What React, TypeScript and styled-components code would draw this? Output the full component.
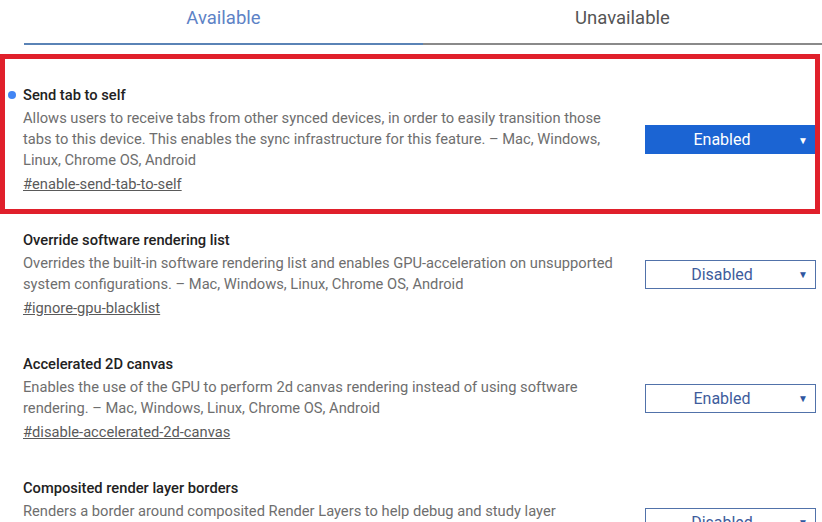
import React from "react";
import styled, { createGlobalStyle, css } from "styled-components";

const Global = createGlobalStyle`
  html, body { margin: 0; padding: 0; background: #fff; }
  body { font-family: Roboto, "Noto Sans", Arial, sans-serif; overflow: hidden; }
`;

const Page = styled.div`
  width: 822px;
  height: 522px;
  overflow: hidden;
  background: #fff;
`;

const Tabs = styled.div`
  display: flex;
  padding-left: 24px;
`;

const Tab = styled.div<{ $active?: boolean }>`
  width: 399px;
  height: 45px;
  box-sizing: border-box;
  padding-top: 6px;
  text-align: center;
  font-size: 18.5px;
  line-height: 24px;
  color: ${(p) => (p.$active ? "#5d82c6" : "#555")};
  border-bottom: 2px solid ${(p) => (p.$active ? "#5a83b6" : "#8a8a8a")};
`;

const List = styled.div`
  display: flex;
  flex-direction: column;
  gap: 34px;
  padding: 39px 6px 0 23px;
`;

const Item = styled.div<{ $highlight?: boolean }>`
  position: relative;
  display: grid;
  grid-template-columns: 1fr 171px;
  column-gap: 22px;
  align-items: center;
  ${(p) =>
    p.$highlight &&
    css`
      &::after {
        content: "";
        position: absolute;
        top: -30px;
        bottom: -19px;
        left: -23px;
        right: -4px;
        border: 5px solid #e0202b;
        pointer-events: none;
        z-index: 2;
      }
    `}
`;

const Info = styled.div`
  display: flex;
  flex-direction: column;
`;

const Title = styled.div`
  position: relative;
  font-size: 14.7px;
  font-weight: 500;
  line-height: 22px;
  color: #222;
`;

const Dot = styled.span`
  position: absolute;
  left: -15px;
  top: 7px;
  width: 8px;
  height: 8px;
  border-radius: 50%;
  background: #4285f4;
`;

const Desc = styled.div`
  margin-top: 2px;
  font-size: 14.7px;
  line-height: 21px;
  color: #6e6e6e;
`;

const Link = styled.a`
  margin-top: 3px;
  font-size: 14.7px;
  line-height: 21px;
  color: #5a5a5a;
  text-decoration: underline;
  align-self: flex-start;
`;

const Select = styled.div<{ $primary?: boolean }>`
  position: relative;
  height: 29px;
  box-sizing: border-box;
  display: flex;
  align-items: center;
  justify-content: center;
  padding-right: 17px;
  font-size: 16px;
  ${(p) =>
    p.$primary
      ? css`
          background: #1b64d3;
          color: #fff;
          border: 1px solid #1b64d3;
        `
      : css`
          background: #fff;
          color: #3e5c9c;
          border: 1.5px solid #5172aa;
        `}
`;

const Arrow = styled.span<{ $primary?: boolean }>`
  position: absolute;
  right: 7px;
  top: 50%;
  transform: translateY(-50%);
  font-size: 10px;
  color: ${(p) => (p.$primary ? "#fff" : "#2f56a0")};
`;

type Flag = {
  title: string;
  desc: string;
  link: string;
  value: string;
  highlight?: boolean;
};

const flags: Flag[] = [
  {
    title: "Send tab to self",
    desc:
      "Allows users to receive tabs from other synced devices, in order to easily transition those tabs to this device. This enables the sync infrastructure for this feature. – Mac, Windows, Linux, Chrome OS, Android",
    link: "#enable-send-tab-to-self",
    value: "Enabled",
    highlight: true,
  },
  {
    title: "Override software rendering list",
    desc:
      "Overrides the built-in software rendering list and enables GPU-acceleration on unsupported system configurations. – Mac, Windows, Linux, Chrome OS, Android",
    link: "#ignore-gpu-blacklist",
    value: "Disabled",
  },
  {
    title: "Accelerated 2D canvas",
    desc:
      "Enables the use of the GPU to perform 2d canvas rendering instead of using software rendering. – Mac, Windows, Linux, Chrome OS, Android",
    link: "#disable-accelerated-2d-canvas",
    value: "Enabled",
  },
  {
    title: "Composited render layer borders",
    desc:
      "Renders a border around composited Render Layers to help debug and study layer compositing. – Mac, Windows, Linux, Chrome OS, Android",
    link: "#composited-layer-borders",
    value: "Disabled",
  },
];

export default function App() {
  return (
    <Page>
      <Global />
      <Tabs>
        <Tab $active>Available</Tab>
        <Tab>Unavailable</Tab>
      </Tabs>
      <List>
        {flags.map((f) => (
          <Item key={f.link} $highlight={f.highlight}>
            <Info>
              <Title>
                {f.highlight && <Dot />}
                {f.title}
              </Title>
              <Desc>{f.desc}</Desc>
              <Link href={f.link}>{f.link}</Link>
            </Info>
            <Select $primary={f.highlight}>
              {f.value}
              <Arrow $primary={f.highlight}>▼</Arrow>
            </Select>
          </Item>
        ))}
      </List>
    </Page>
  );
}
